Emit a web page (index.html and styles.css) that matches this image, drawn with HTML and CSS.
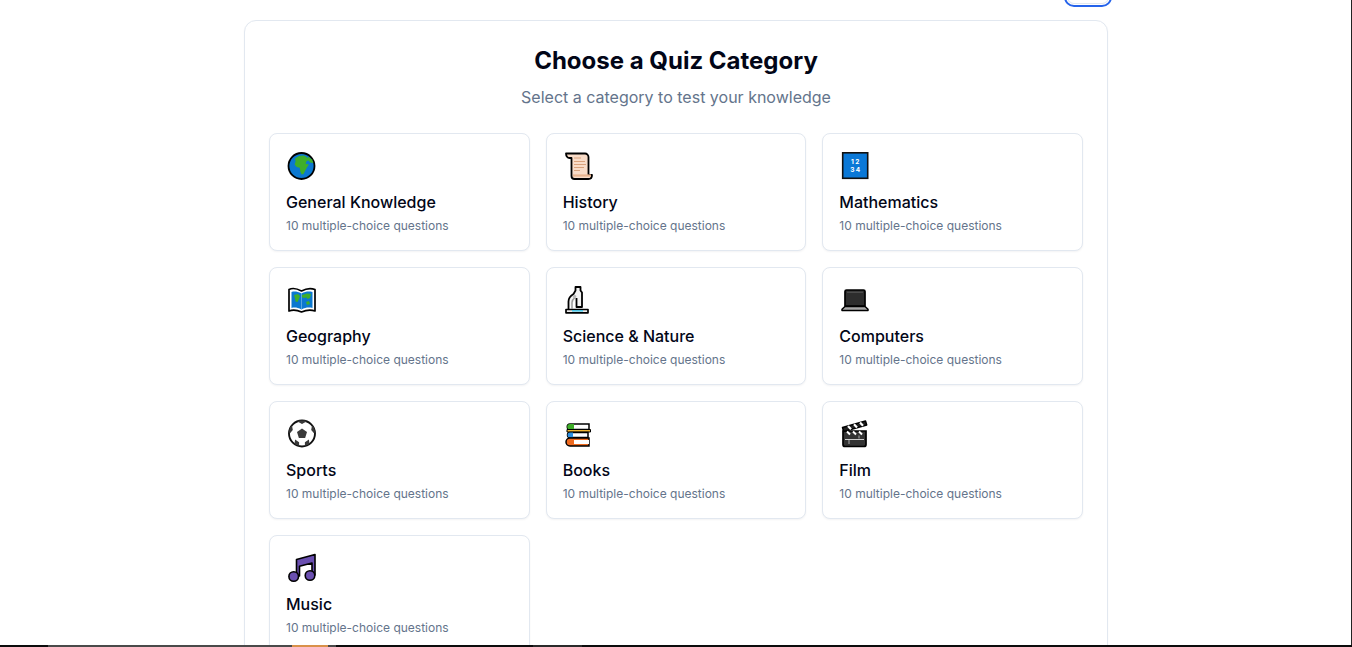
FILE: index.html
```html
<!DOCTYPE html>
<html lang="en">
<head>
<meta charset="utf-8">
<title>Choose a Quiz Category</title>
<link rel="stylesheet" href="styles.css">
</head>
<body>
<div class="page">
  <div class="topbar"><button class="top-btn" type="button" aria-label="Menu"></button></div>
  <main class="panel">
    <h1 class="title">Choose a Quiz Category</h1>
    <p class="subtitle">Select a category to test your knowledge</p>
    <div class="grid">
      <article class="card">
        <svg class="icon" viewBox="0 0 32 32">
          <circle cx="15.5" cy="16" r="13" fill="#0b78d0" stroke="#000" stroke-width="1.8"/>
          <path d="M9 8.5l4-2.6 5-.4 3 1.8 2.6 3-3 .8-1 2.6 3.4.8-2 2.8-1.6 3-1.8 3.6-2 .6-1.4-3.2-.4-3.6-3.2-.6-2-2.6 1-3.2z" fill="#3fae29"/>
          <path d="M22 6.5l4 3 1.4 3.5-3.4-.6-2-3z" fill="#3fae29"/>
        </svg>
        <h2 class="name">General Knowledge</h2>
        <p class="desc">10 multiple-choice questions</p>
      </article>
      <article class="card">
        <svg class="icon" viewBox="0 0 32 32">
          <path d="M3 3.5h19a3.5 3.5 0 0 1 3.500 3.500V25h3.500c0 2.500-1 4-3.500 4H11.500a3 3 0 0 1-3-3V8H6.500C4.500 8 3 6 3 3.500z" fill="#f9dcc8" stroke="#000" stroke-width="1.800" stroke-linejoin="round"/>
          <path d="M10 25.500h18" stroke="#e8b48f" stroke-width="2.200"/>
          <path d="M11 8h7M11 11.500h11M11 14.500h12M11 17.500h10M11 20.500h6" stroke="#d9a27c" stroke-width="1"/>
        </svg>
        <h2 class="name">History</h2>
        <p class="desc">10 multiple-choice questions</p>
      </article>
      <article class="card">
        <svg class="icon" viewBox="0 0 32 32">
          <rect x="3.700" y="2.800" width="25" height="25.500" fill="#0a78d7" stroke="#111" stroke-width="1.600"/>
          <text class="digits" x="16.200" y="13.500">1 2</text>
          <text class="digits" x="16.200" y="22">3 4</text>
        </svg>
        <h2 class="name">Mathematics</h2>
        <p class="desc">10 multiple-choice questions</p>
      </article>
      <article class="card">
        <svg class="icon" viewBox="0 0 32 32">
          <path d="M3 5.500c3-1.500 7-1.500 12.500 1.500C21 4 25 4 29 5.500V27c-4-1.500-8-1.500-13.500 1C10 25.500 7 25.500 3 27z" fill="#fff" stroke="#000" stroke-width="1.700" stroke-linejoin="round"/>
          <path d="M5.500 8c3-1 6-.5 10 1.500 4-2 7-2.500 11-1.500v16c-4-1-7-.5-11 1.500-4-2-7-2.500-10-1.500z" fill="#0b78d0"/>
          <path d="M8 11l4-1 2 2-1 3-1.500 3-2-.5-.5-3zM16 11l5-1.500 4 .5-1 4-2.500 1-1-1.500-3 .5-1.500-1zM20 18l3-1 1 3-3 1z" fill="#3fae29"/>
          <path d="M15.500 9v16.500" stroke="#8cc4ea" stroke-width=".6"/>
        </svg>
        <h2 class="name">Geography</h2>
        <p class="desc">10 multiple-choice questions</p>
      </article>
      <article class="card">
        <svg class="icon" viewBox="0 0 32 32">
          <path d="M3 25.500h22v3.300H3z" fill="#eee" stroke="#000" stroke-width="1.700" stroke-linejoin="round"/>
          <path d="M5.500 25V17.500c0-3 1.800-5.500 5-7.500l2-3.500V3h5v3.500l1.500 2V23h-5.500v-9" fill="#f3f3f3" stroke="#000" stroke-width="1.800" stroke-linejoin="round"/>
          <path d="M9 25v-6.500c0-2 1-3.500 3-5" fill="none" stroke="#999" stroke-width="1.500"/>
          <circle cx="11.500" cy="12.500" r="1.800" fill="#bbb"/>
          <path d="M9 26.800h11" stroke="#43c6e8" stroke-width="1.500"/>
        </svg>
        <h2 class="name">Science &amp; Nature</h2>
        <p class="desc">10 multiple-choice questions</p>
      </article>
      <article class="card">
        <svg class="icon" viewBox="0 0 32 32">
          <path d="M6 7.500a1.500 1.500 0 0 1 1.500-1.500h17a1.500 1.500 0 0 1 1.500 1.500V22H6z" fill="#2d2d2d" stroke="#000" stroke-width="1.700"/>
          <path d="M6 22.500h20l3 2.800v1.200H3v-1.200z" fill="#a8a8a8" stroke="#000" stroke-width="1.500" stroke-linejoin="round"/>
          <path d="M8 8.200h16" stroke="#666" stroke-width=".8"/>
        </svg>
        <h2 class="name">Computers</h2>
        <p class="desc">10 multiple-choice questions</p>
      </article>
      <article class="card">
        <svg class="icon" viewBox="0 0 32 32">
          <circle cx="16" cy="15.500" r="13" fill="#fff" stroke="#111" stroke-width="1.900"/>
          <path d="M16 10.500l5 3.600-1.900 5.900h-6.200L11 14.100z" fill="#3a3a3a"/>
          <path d="M11.500 3.500L16 6l4.500-2.500-1-1h-7zM26 7.500l-.8 4.500 3 3.500.8-2-1-4zM6 7.500l.8 4.500-3 3.500-.8-2 1-4zM8.500 26l.6-4.500 4 2.800v3.400zM23.500 26l-.6-4.500-4 2.800v3.400z" fill="#3a3a3a"/>
        </svg>
        <h2 class="name">Sports</h2>
        <p class="desc">10 multiple-choice questions</p>
      </article>
      <article class="card">
        <svg class="icon" viewBox="0 0 32 32">
          <path d="M7 6h19v5.500H7a2.700 2.700 0 0 1 0-5.500z" fill="#fff" stroke="#000" stroke-width="1.500"/>
          <path d="M7 6h4v5.500H7a2.700 2.700 0 0 1 0-5.500z" fill="#3fae29"/>
          <path d="M4 11.500h23.500v2.500H4z" fill="#f2b632" stroke="#000" stroke-width="1"/>
          <path d="M7 14.500h18v5H7a2.500 2.500 0 0 1 0-5z" fill="#fff" stroke="#000" stroke-width="1.500"/>
          <path d="M7 14.500h3v5H7a2.500 2.500 0 0 1 0-5z" fill="#2c8fe0"/>
          <path d="M7 20h19v8H7a4 4 0 0 1 0-8z" fill="#ef6a1f" stroke="#000" stroke-width="1.500"/>
          <path d="M11 22h15v4H11z" fill="#fff"/>
        </svg>
        <h2 class="name">Books</h2>
        <p class="desc">10 multiple-choice questions</p>
      </article>
      <article class="card">
        <svg class="icon" viewBox="0 0 32 32">
          <path d="M4 13h23v13.500a2 2 0 0 1-2 2H6a2 2 0 0 1-2-2z" fill="#333" stroke="#000" stroke-width="1.700"/>
          <path d="M3.500 9.500L26.500 3l1.200 4-23 6.500z" fill="#222" stroke="#000" stroke-width="1.500" stroke-linejoin="round"/>
          <path d="M9 8l3 3.200M15 6.300l3 3.200M21 4.600l3 3.200" stroke="#fff" stroke-width="2.200"/>
          <path d="M8 13.500l3 3M14 13.500l3 3M20 13.500l3 3" stroke="#fff" stroke-width="2"/>
          <path d="M6 21.500h19" stroke="#ccc" stroke-width="1"/>
          <path d="M20 17.500v3M10 22v4" stroke="#aaa" stroke-width="1"/>
        </svg>
        <h2 class="name">Film</h2>
        <p class="desc">10 multiple-choice questions</p>
      </article>
      <article class="card">
        <svg class="icon" viewBox="0 0 32 32">
          <path d="M10.500 24V7.500L29 2.500V23h-3V11L13.500 14.200V24z" fill="#6a4fb0" stroke="#000" stroke-width="1.600" stroke-linejoin="round"/>
          <circle cx="7.700" cy="24.500" r="4.800" fill="#6a4fb0" stroke="#000" stroke-width="1.600"/>
          <circle cx="24" cy="23.500" r="4.800" fill="#6a4fb0" stroke="#000" stroke-width="1.600"/>
        </svg>
        <h2 class="name">Music</h2>
        <p class="desc">10 multiple-choice questions</p>
      </article>
    </div>
  </main>
</div>
<div class="edge-right"></div>
<div class="taskbar">
  <span class="tb-gap"></span>
  <span class="tb-app"><span class="tb-thumb"></span></span>
  <span class="tb-gap2"></span>
  <span class="tb-item"></span>
</div>
</body>
</html>
```
FILE: styles.css
```css
* { box-sizing: border-box; }
html, body { margin: 0; height: 100%; overflow: hidden; background: #fff; }
body { font-family: "Inter", "Liberation Sans", sans-serif; color: #0f172a; }
.page { display: flex; flex-direction: column; align-items: center; }
.topbar { width: 864px; height: 7px; display: flex; justify-content: flex-end; align-items: flex-end; margin-bottom: 13px; }
.top-btn {
  width: 48px; height: 30px; flex: none; margin-right: -4px; padding: 0;
  background: #fff; border: 2px solid #2563eb; border-radius: 10px;
  box-shadow: inset 0 0 0 1px #fff, inset 0 0 0 2px #e2e8f0;
}
.panel {
  width: 864px; flex: none; padding: 24px;
  border: 1px solid #e2e8f0; border-radius: 12px; background: #fff;
  box-shadow: 0 1px 2px rgba(15, 23, 42, .04);
}
.title { margin: 0; font-size: 24px; line-height: 32px; font-weight: 700; text-align: center; color: #020617; }
.subtitle { margin: 8px 0 24px; font-size: 16px; line-height: 24px; text-align: center; color: #64748b; }
.grid { display: grid; grid-template-columns: repeat(3, 1fr); gap: 16px; }
.card {
  height: 118px; padding: 16px; background: #fff;
  border: 1px solid #e2e8f0; border-radius: 8px;
  box-shadow: 0 1px 2px rgba(15, 23, 42, .05);
}
.icon { display: block; width: 32px; height: 32px; }
.digits { font-family: "Inter", sans-serif; font-size: 6.500px; font-weight: 700; fill: #fff; text-anchor: middle; }
.name { margin: 8px 0 4px; font-size: 16px; line-height: 24px; font-weight: 500; color: #020617; }
.desc { margin: 0; font-size: 12px; line-height: 16px; color: #64748b; }
.edge-right { position: fixed; top: 0; right: 0; bottom: 0; width: 1px; background: #222; }
.taskbar { position: fixed; left: 0; right: 0; bottom: 0; height: 2px; display: flex; background: #0c0c0c; }
.tb-gap { width: 48px; }
.tb-app { width: 288px; background: #4a4a4a; position: relative; }
.tb-thumb { position: absolute; left: 244px; top: 0; bottom: 0; width: 36px; background: #d9914a; }
.tb-gap2 { width: 197px; }
.tb-item { width: 49px; background: #2a2a2a; }
```
